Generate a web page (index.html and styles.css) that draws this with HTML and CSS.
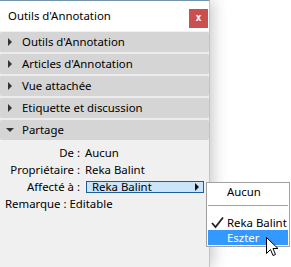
FILE: index.html
```html
<!DOCTYPE html>
<html lang="fr">
<head>
<meta charset="utf-8">
<link rel="stylesheet" href="styles.css">
</head>
<body>
<div class="panel">
  <div class="titlebar">
    <span class="title">Outils d'Annotation</span>
    <span class="close">x</span>
  </div>
  <div class="sections">
    <div class="hdr"><span class="tri-r"></span>Outils d'Annotation</div>
    <div class="hdr"><span class="tri-r"></span>Articles d'Annotation</div>
    <div class="hdr"><span class="tri-r"></span>Vue attachée</div>
    <div class="hdr"><span class="tri-r"></span>Etiquette et discussion</div>
    <div class="hdr"><span class="tri-d"></span>Partage</div>
  </div>
  <div class="props">
    <span class="lbl">De :</span><span class="val">Aucun</span>
    <span class="lbl">Propriétaire :</span><span class="val">Reka Balint</span>
    <span class="lbl">Affecté à :</span><span class="select">Reka Balint<span class="sel-arrow"></span></span>
    <span class="remark">Remarque : Editable</span>
  </div>
</div>

<div class="menu">
  <div class="item">Aucun</div>
  <div class="sep"></div>
  <div class="item checked"><svg class="check" width="13" height="13" viewBox="0 0 13 13"><path d="M1 7 L4.5 11 L12 1.5" fill="none" stroke="#222" stroke-width="1.8"/></svg>Reka Balint</div>
  <div class="item hot">Eszter</div>
</div>

<svg class="cursor" width="13" height="21" viewBox="0 0 13 21">
  <path d="M0.5 0.5 L0.5 16.5 L4.5 12.5 L7 18.5 L9.5 17.5 L7 11.5 L12 11.5 Z" fill="#fff" stroke="#000" stroke-width="1" stroke-linejoin="miter"/>
</svg>
</body>
</html>
```
FILE: styles.css
```css
html, body {
  margin: 0;
  padding: 0;
  background: #ffffff;
}
body {
  font-family: "Noto Sans", "Liberation Sans", sans-serif;
  font-size: 11.4px;
  color: #000;
  width: 291px;
  height: 267px;
  overflow: hidden;
  position: relative;
}
.panel {
  width: 210px;
  height: 267px;
  box-sizing: border-box;
  background: #f0f0f0;
  border-top: 1px solid #7393ae;
  box-shadow: 3px 0 14px rgba(0, 0, 0, 0.22);
  border-right: 1px solid #c4c4c4;
  display: flex;
  flex-direction: column;
}
.titlebar {
  height: 30px;
  background: #ffffff;
  display: flex;
  align-items: center;
  justify-content: space-between;
  padding: 0 1px 0 8px;
  margin-bottom: 1px;
}
.title {
  line-height: 14px;
  margin-top: -1px;
}
.close {
  width: 19px;
  height: 19px;
  margin-top: 5px;
  background: #c9504f;
  color: #fff;
  font-family: "DejaVu Sans Mono", monospace;
  font-weight: bold;
  font-size: 10px;
  line-height: 18px;
  text-align: center;
}
.sections {
  display: flex;
  flex-direction: column;
  gap: 2px;
  background: #ececec;
}
.hdr {
  height: 20px;
  background: #d5d5d5;
  border-radius: 2px;
  display: flex;
  align-items: center;
  padding-left: 8px;
  line-height: 14px;
}
.tri-r {
  width: 0;
  height: 0;
  border-top: 4px solid transparent;
  border-bottom: 4px solid transparent;
  border-left: 4px solid #333;
  margin-right: 10px;
}
.tri-d {
  width: 0;
  height: 0;
  border-left: 4px solid transparent;
  border-right: 4px solid transparent;
  border-top: 4px solid #333;
  margin-left: -2px;
  margin-right: 8px;
}
.props {
  display: grid;
  grid-template-columns: 80px 1fr;
  grid-auto-rows: 17px;
  column-gap: 5px;
  align-items: center;
  padding-top: 4px;
}
.lbl {
  text-align: right;
  white-space: nowrap;
}
.val {
  white-space: nowrap;
}
.select {
  position: relative;
  margin-left: 1px;
  width: 118px;
  height: 12px;
  box-sizing: border-box;
  border: 1px solid #1a5e9e;
  background: #cce4f7;
  padding-left: 5px;
  line-height: 10px;
  white-space: nowrap;
}
.sel-arrow {
  position: absolute;
  right: 4px;
  top: 1px;
  width: 0;
  height: 0;
  border-top: 4px solid transparent;
  border-bottom: 4px solid transparent;
  border-left: 4px solid #111;
}
.remark {
  grid-column: 1 / -1;
  padding-left: 5px;
}
.menu {
  position: absolute;
  left: 206px;
  top: 182px;
  width: 84px;
  box-sizing: border-box;
  background: #fff;
  border: 1px solid #a0a0a0;
  padding: 0 0 1px 0;
}
.item {
  height: 15px;
  line-height: 15px;
  padding-left: 20px;
  position: relative;
  margin-top: 1px;
  white-space: nowrap;
}
.sep {
  height: 1px;
  background: #a0a0a0;
  margin: 6px 1px 9px 1px;
}
.check {
  position: absolute;
  left: 4px;
  top: 1px;
}
.hot {
  background: #3399ff;
  color: #fff;
  height: 15px;
  line-height: 15px;
  margin: 0 1px;
  padding-left: 19px;
}
.cursor {
  position: absolute;
  left: 266px;
  top: 237px;
}
```
